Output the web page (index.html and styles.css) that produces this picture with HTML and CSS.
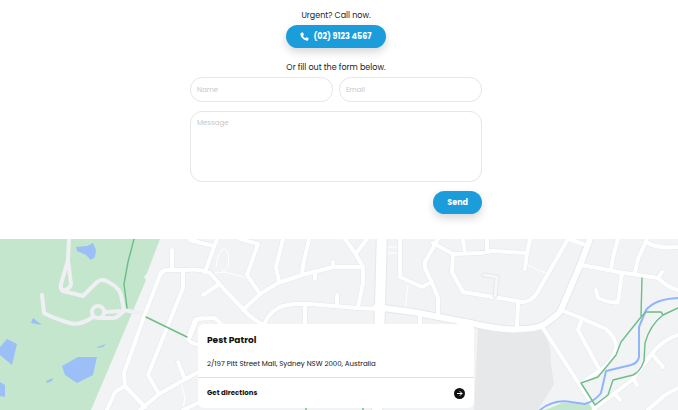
FILE: index.html
```
<!DOCTYPE html>
<html lang="en">
<head>
<meta charset="utf-8">
<meta name="viewport" content="width=device-width, initial-scale=1">
<title>Pest Patrol</title>
<link rel="stylesheet" href="styles.css">
</head>
<body>
<section class="contact">
	<p class="lead">Urgent? Call now.</p>
	<a class="btn" href="tel:0291234567">
		<svg class="icon-phone" viewBox="0 0 24 24" aria-hidden="true"><path d="M6 1 2.600 2.400C1 3.100 0.800 4.200 1 5.500 2.400 14.500 9.500 21.600 18.500 23c1.300.2 2.400 0 3.100-1.600L23 18c.3-1-.1-1.700-.8-2.100l-4.600-2c-.8-.3-1.500-.1-2 .5l-1.600 2C11 15 9 13 7.600 10l2-1.600c.6-.5.8-1.200.5-2l-2-4.600C7.700 1 7 .7 6 1z"/></svg>
		<span>(02) 9123 4567</span>
	</a>
	<p class="lead">Or fill out the form below.</p>
	<form class="form">
		<div class="row">
			<input class="field" type="text" placeholder="Name" aria-label="Name">
			<input class="field" type="email" placeholder="Email" aria-label="Email">
		</div>
		<textarea class="field message" placeholder="Message" aria-label="Message"></textarea>
		<button class="btn send" type="button">Send</button>
	</form>
</section>
<section class="location">
	<svg class="map" viewBox="0 0 678 171" preserveAspectRatio="xMidYMin slice" aria-hidden="true">
		<defs>
			<g id="streets">
				<path d="M188 31H166Q162 32 160 36L145 75 124 134 125 147 145 168M172 11V31M183 32V49L148 136 159 155M140 171 159 155 200 132 210 128M125 147 115 153 107 171M202 79 195 81 188 99Q189 105 202 106M178 123 184 138M183 171 200 163M191 0 200 4"/>
				<path d="M186 31Q198 29 210 34L223 49 242 69Q250 79 264 86M190 1 213 7M217 0 205 33M218 46 203 56M240 0 258 5 247 36 260 55M243 71 260 55 278 44 302 36 333 28H362M283 0 276 28 279 43M309 0 303 26 302 36M333 23V28M315 34V40M345 0 355 14 363 28V44L358 68M367 0 357 13M264 86Q268 74 280 68 292 64 310 65L357 69 380 70M337 56V67M305 66V88M190 98 197 80 215 79 224 88"/>
				<path d="M400 0V38L422 48 430 44M438 0 425 23V29L433 46 438 59V76M433 4 453 15 480 14 493 12 527 14M530 0 527 14 525 30M463 1 465 14M487 1V12M453 15 452 33 463 53 493 58 523 63Q532 62 537 54L568 0M517 88 518 64M420 76V88"/>
				<path d="M568 0 583 5M581 26 598 29 618 33 658 39Q668 49 678 51M618 0 613 18 611 31M647 0 638 20 635 34M646 3Q656 10 678 8M662 33 658 39M622 34 618 63Q612 65 598 59L596 51M561 71 581 79 606 90Q617 100 616 109 614 120 602 130L581 145M582 80 578 91 598 128M543 89 594 168M594 170 633 140 651 116Q662 101 678 96M653 116 663 128M633 139 637 146M615 155 620 161M648 171 665 156 678 149"/>
			</g>
			<path id="avenue" d="M376 68 413 73 470 84Q505 92 520 90 541 90 549 82 558 76 561 71L581 24 590 0"/>
		</defs>
		<rect class="land" width="678" height="171"/>
		<path class="park" d="M0 0H160L147 34 144 38 146 41 91 171H0z"/>
		<path class="park" d="M545 171 562 164 588 164 594 171z"/>
		<path class="block" d="M478 89 513 94 543 91 550 108 551 125 554 145 538 171H474z"/>
		<path class="water" d="M76 8 87 7 93 4 96 11 95 18 91 21 86 16 77 12zM33 79 42 86 31 84zM0 108 7 100 17 105 12 126 0 116zM97 108 106 105 103 108 98 109zM62 127 78 118 97 118 93 136 77 144 65 136zM46 142 53 139 52 142 47 144zM0 143 5 146V158L0 157z"/>
		<!-- footpaths inside the park -->
		<path class="path" d="M69 0 68 21 61 45Q60 50 63 52 71 49 71 45L68 21M63 52 83 57 96 44Q102 38 110 44 121 49 122 61L124 71 144 75M105 73 124 72M101 79H114Q118 78 124 72M93 78Q80 87 70 84 55 80 44 74L42 56M104 73a6 6 0 1 1-12 0 6 6 0 1 1 12 0"/>
		<path class="lane" d="M215 34 225 33 247 39M216 28Q218 10 225 10 230 12 228 28L221 33M408 46 405 71M527 26 546 34M386 8H398M386 14H398M180 141 185 158 183 171"/>
		<use class="casing" href="#streets"/>
		<use class="casing wide" href="#avenue"/>
		<path class="casing highway" d="M382-9 377 180"/>
		<use class="road" href="#streets"/>
		<use class="road wide" href="#avenue"/>
		<path class="road highway" d="M382-9 377 180"/>
		<path class="casing" d="M495 57 497 38 484 36"/>
		<path class="alley" d="M495 57 497 38 484 36"/>
		<path class="river" d="M678 59Q655 60 646 71L639 88V118Q638 124 631 126L606 132 601 154Q595 162 585 165L571 163Q554 160 540 171"/>
		<path class="trail" d="M134 0 128 23 124 45 127 69M146 78 187 98M642 39 641 77M678 69 663 76Q650 86 645 104L644 122Q640 133 633 136L613 141 608 156 595 166 581 144 598 138 616 116 621 103 641 78 646 73H661L663 76M306 165V171M363 165V171"/>
	</svg>
	<div class="card">
		<div class="card-body">
			<h2 class="card-title">Pest Patrol</h2>
			<p class="address">2/197 Pitt Street Mall, Sydney NSW 2000, Australia</p>
		</div>
		<a class="directions" href="#">
			<span>Get directions</span>
			<svg class="icon-arrow" viewBox="0 0 22 22" aria-hidden="true"><circle cx="11" cy="11" r="11"/><path d="M6 11H16M11.500 6.500 16 11 11.500 15.500"/></svg>
		</a>
	</div>
</section>
</body>
</html>
```
FILE: styles.css
```
* {
	box-sizing: border-box;
	margin: 0;
	padding: 0;
}
body {
	font: 8px/12px Poppins, Inter, "Liberation Sans", sans-serif;
	color: #222;
	background: #fff;
}
a {
	color: inherit;
	text-decoration: none;
}
.contact {
	display: flex;
	flex-direction: column;
	align-items: center;
	padding: 10px 14px 25px 8px;
}
.lead {
	margin-bottom: 3px;
}
.btn {
	display: flex;
	align-items: center;
	justify-content: center;
	gap: 4px;
	height: 23px;
	padding: 0 14px;
	border: 0;
	border-radius: 12px;
	background: #1b9ddb;
	box-shadow: 0 4px 8px rgba(0, 0, 0, .16);
	color: #fff;
	font: inherit;
	font-weight: 700;
	cursor: pointer;
}
.contact > .btn {
	margin-bottom: 14px;
}
.icon-phone {
	width: 9px;
	height: 9px;
	fill: #fff;
}
.form {
	display: flex;
	flex-direction: column;
	gap: 9px;
	width: 100%;
	max-width: 292px;
}
.row {
	display: grid;
	grid-template-columns: 1fr 1fr;
	gap: 6px;
}
.field {
	width: 100%;
	min-width: 0;
	height: 25px;
	padding: 0 6px;
	border: 1px solid #e6e6e6;
	border-radius: 12px;
	outline: 0;
	background: #fff;
	color: #222;
	font: inherit;
	font-size: 7px;
}
.field::placeholder {
	color: #c8c8c8;
	opacity: 1;
}
.message {
	display: block;
	height: 71px;
	padding: 5px 6px;
	resize: none;
}
.send {
	align-self: flex-end;
}

.location {
	position: relative;
	padding: 85px 14px 2px 8px;
	overflow: hidden;
}
.map {
	position: absolute;
	top: 0;
	left: 0;
	width: 100%;
	height: 100%;
	fill: none;
	stroke-linejoin: round;
	stroke-linecap: round;
}
.land {
	fill: #f2f3f4;
}
.park {
	fill: #c3e6cd;
}
.block {
	fill: #e6e8ea;
}
.water {
	fill: #9cbff8;
}
.path {
	stroke: #f0eff3;
	stroke-width: 4px;
}
.lane {
	stroke: #fff;
	stroke-width: 1px;
}
.casing {
	stroke: #e5e7e9;
	stroke-width: 5px;
}
.road {
	stroke: #fff;
	stroke-width: 4px;
}
.alley {
	stroke: #f6f7f8;
	stroke-width: 3px;
}
.casing.wide {
	stroke-width: 8px;
}
.road.wide {
	stroke-width: 6px;
}
.casing.highway {
	stroke-width: 12px;
}
.road.highway {
	stroke-width: 10px;
}
.river {
	stroke: #8fb6fa;
	stroke-width: 2px;
}
.trail {
	stroke: #6cbd87;
	stroke-width: 1.4;
}
.card {
	position: relative;
	max-width: 276px;
	margin: 0 auto;
	border-radius: 6px;
	background: #fff;
	color: #111;
}
.card-body {
	padding: 10px 9px 7px;
	border-bottom: 1px solid #e2e2e2;
}
.card-title {
	margin-bottom: 12px;
	font-size: 9px;
	line-height: 12px;
	font-weight: 700;
}
.address {
	font-size: 7px;
}
.directions {
	display: flex;
	align-items: center;
	justify-content: space-between;
	padding: 9px;
	font-size: 7px;
	font-weight: 700;
}
.icon-arrow {
	width: 11px;
	height: 11px;
	fill: #111;
}
.icon-arrow path {
	fill: none;
	stroke: #fff;
	stroke-width: 2px;
}
```
